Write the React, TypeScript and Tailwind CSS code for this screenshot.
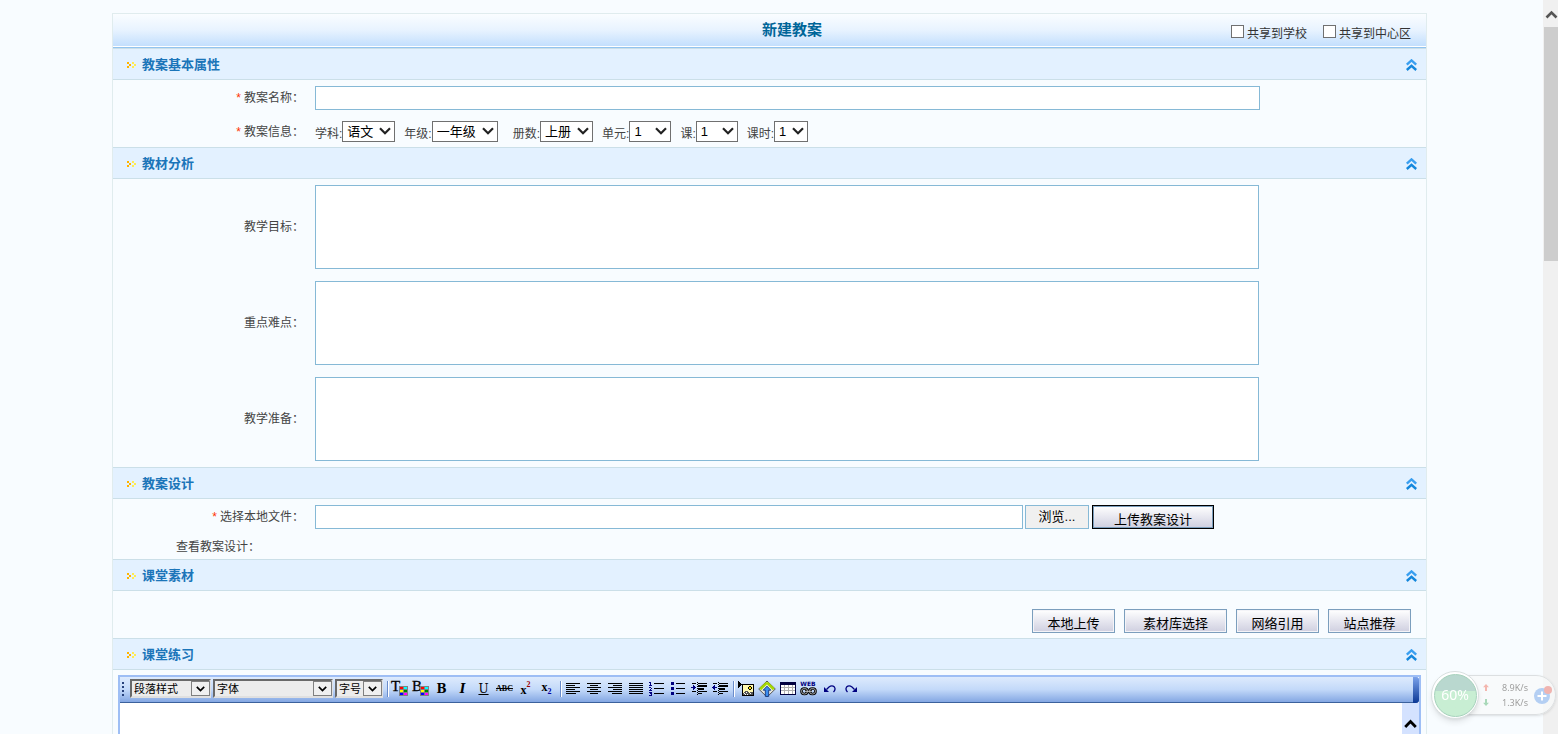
import type { ReactNode } from 'react'

function PxIcon({ w, h, children }: { w: number; h: number; children: ReactNode }) {
  return (
    <svg
      width={w}
      height={h}
      viewBox={`0 0 ${w} ${h}`}
      shapeRendering="crispEdges"
      className="block shrink-0 overflow-visible"
      aria-hidden="true"
    >
      {children}
    </svg>
  )
}

function DoubleArrow() {
  return (
    <PxIcon w={10} h={6}>
      <path d="M0 0h2v2h-2zM2 2h2v2h-2zM0 4h2v2h-2z" fill="#ffb400" />
      <path d="M5 0h2v2h-2zM7 2h2v2h-2zM5 4h2v2h-2z" fill="#ffec50" />
    </PxIcon>
  )
}

function CollapseIcon() {
  return (
    <svg width="11" height="12" viewBox="0 0 11 12" className="block" aria-hidden="true">
      <path d="M.8 5.6 5.5 1.400 10.200 5.600" fill="none" stroke="#3a9ff0" strokeWidth="2.400" />
      <path d="M.8 11 5.500 6.800 10.200 11" fill="none" stroke="#1487dc" strokeWidth="2.400" />
    </svg>
  )
}

function Section({ title, children }: { title: string; children: ReactNode }) {
  return (
    <section>
      <header className="flex h-8 items-center border-y border-[#cbdfe8] bg-[#e3f1ff] pl-[14px] pr-[9px] pt-[2px]">
        <DoubleArrow />
        <h2 className="ml-[5px] flex-1 text-[13px] font-bold leading-4 text-[#1b75b9]">{title}</h2>
        <button type="button" aria-label={`收起${title}`}>
          <CollapseIcon />
        </button>
      </header>
      {children}
    </section>
  )
}

function Label({ text, htmlFor, required }: { text: string; htmlFor: string; required?: boolean }) {
  return (
    <label htmlFor={htmlFor} className="w-[191px] shrink-0 text-right">
      {required && <span className="mr-[3px] text-[#ff3300]">*</span>}
      {text}
    </label>
  )
}

const picks = [
  { id: 'subject', label: '学科:', value: '语文', width: 'w-[53px]', gap: '' },
  { id: 'grade', label: '年级:', value: '一年级', width: 'w-[66px]', gap: 'ml-[9px]' },
  { id: 'volume', label: '册数:', value: '上册', width: 'w-[53px]', gap: 'ml-[15px]' },
  { id: 'unit', label: '单元:', value: '1', width: 'w-[42px]', gap: 'ml-[9px]' },
  { id: 'lesson', label: '课:', value: '1', width: 'w-[42px]', gap: 'ml-[9px]' },
  { id: 'period', label: '课时:', value: '1', width: 'w-[34px]', gap: 'ml-[9px]' },
]

function Pick({ id, label, value, width, gap }: (typeof picks)[number]) {
  return (
    <div className={`flex items-end ${gap}`}>
      <label htmlFor={id} className="whitespace-nowrap">
        {label}
      </label>
      <div className={`relative ${width}`}>
        <select
          id={id}
          className="block h-[21px] w-full appearance-none border border-[#707070] bg-white pl-1 text-[13px] leading-[18px] text-black"
        >
          <option>{value}</option>
        </select>
        <svg width="12" height="8" viewBox="0 0 12 8" className="pointer-events-none absolute right-1 top-[6px]" aria-hidden="true">
          <path d="M1 1.2 6 6.2 11 1.2" fill="none" stroke="#222" strokeWidth="2.2" />
        </svg>
      </div>
    </div>
  )
}

const areas = [
  { id: 'goal', label: '教学目标：' },
  { id: 'focus', label: '重点难点：' },
  { id: 'prepare', label: '教学准备：' },
]

const sources = [
  { text: '本地上传', width: 'w-[83px]' },
  { text: '素材库选择', width: 'w-[103px]' },
  { text: '网络引用', width: 'w-[83px]' },
  { text: '站点推荐', width: 'w-[83px]' },
]

function Palette() {
  return (
    <g>
      <path d="M8 5h9v10h-9z" fill="#808080" />
      <path d="M9 6h3v2h-3z" fill="#f00" />
      <path d="M13 6h3v2h-3z" fill="#0ff" />
      <path d="M9 9h3v2h-3z" fill="#ff0" />
      <path d="M13 9h3v2h-3z" fill="#008000" />
      <path d="M9 12h3v2h-3z" fill="#00f" />
      <path d="M13 12h3v2h-3z" fill="#f0f" />
    </g>
  )
}

function Lines({ d }: { d: string }) {
  return (
    <PxIcon w={14} h={12}>
      <path d={d} stroke="#000" fill="none" />
    </PxIcon>
  )
}

const textTools = [
  {
    name: '字体颜色',
    icon: (
      <PxIcon w={17} h={16}>
        <text x="0" y="10" fontSize="15" className="font-['Liberation_Serif',serif]" stroke="#000" strokeWidth="0.3">T</text>
        <Palette />
      </PxIcon>
    ),
  },
  {
    name: '背景颜色',
    icon: (
      <PxIcon w={17} h={16}>
        <text x="0" y="10" fontSize="15" className="font-['Liberation_Serif',serif]" stroke="#000" strokeWidth="0.3">B</text>
        <Palette />
      </PxIcon>
    ),
  },
  { name: '加粗', icon: <span className="font-['DejaVu_Serif',serif] text-[12px] font-bold leading-4">B</span> },
  { name: '斜体', icon: <span className="font-['DejaVu_Serif',serif] text-[12px] font-bold italic leading-4">I</span> },
  { name: '下划线', icon: <span className="font-['DejaVu_Serif',serif] text-[12px] leading-4 underline">U</span> },
  { name: '删除线', icon: <span className="font-['Liberation_Serif',serif] text-[8px] font-bold leading-4 line-through">ABC</span> },
  {
    name: '上标',
    icon: (
      <span className="flex font-['Liberation_Serif',serif]">
        <span className="pt-[3px] text-[12px] font-bold leading-3">x</span>
        <span className="text-[8px] font-bold leading-[8px] text-[#a00000]">2</span>
      </span>
    ),
  },
  {
    name: '下标',
    icon: (
      <span className="flex font-['Liberation_Serif',serif]">
        <span className="pb-[3px] text-[12px] font-bold leading-3">x</span>
        <span className="self-end text-[8px] font-bold leading-[8px] text-[#0000a0]">2</span>
      </span>
    ),
  },
]

const layoutTools = [
  { name: '左对齐', icon: <Lines d="M0 .5h14M0 2.5h9M0 4.5h14M0 6.5h9M0 8.5h14M0 10.5h10" /> },
  { name: '居中', icon: <Lines d="M0 .5h14M3 2.5h8M0 4.5h14M3 6.5h8M0 8.5h14M3 10.5h8" /> },
  { name: '右对齐', icon: <Lines d="M0 .5h14M5 2.5h9M0 4.5h14M5 6.5h9M0 8.5h14M4 10.5h10" /> },
  { name: '两端对齐', icon: <Lines d="M0 .5h14M0 2.5h14M0 4.5h14M0 6.5h14M0 8.5h14M0 10.5h14" /> },
  {
    name: '编号列表',
    icon: (
      <PxIcon w={15} h={14}>
        <path d="M5 1.5h10M5 6.500h10M5 11.5h10" stroke="#000" />
        <path
          d="M1 0h1v3h1v1h-3v-1h1v-2h-1v-1h1zM0 5h2v1h1v1h-1v1h1v1h-3v-1h1v-1h1v-1h-2zM0 10h3v4h-3v-1h2v-1h-1v-1h1h-2z"
          fill="#000080"
        />
      </PxIcon>
    ),
  },
  {
    name: '项目列表',
    icon: (
      <PxIcon w={14} h={13}>
        <path d="M5 1.5h9M5 6.5h9M5 11.5h9" stroke="#000" />
        <path d="M0 0h3v3h-3zM0 5h3v3h-3zM0 10h3v3h-3z" fill="#000080" />
      </PxIcon>
    ),
  },
  {
    name: '增加缩进',
    icon: (
      <PxIcon w={16} h={13}>
        <path d="M1 1.5h4M7 1.5h9M1 9.5h4M7 9.5h9M7 11.5h4" stroke="#000" />
        <path d="M7 3h9v2h-9zM7 6h6v2h-6z" />
        <path d="M6.5 0v13" stroke="#000" strokeDasharray="1 1" />
        <path d="M0 5h2v-2h1v1h1v1h1v1h-1v1h-1v1h-1v-2h-2z" fill="#000080" />
      </PxIcon>
    ),
  },
  {
    name: '减少缩进',
    icon: (
      <PxIcon w={16} h={13}>
        <path d="M1 1.5h4M7 1.5h9M1 9.5h4M7 9.5h9M7 11.5h4" stroke="#000" />
        <path d="M7 3h9v2h-9zM7 6h6v2h-6z" />
        <path d="M6.5 0v13" stroke="#000" strokeDasharray="1 1" />
        <path d="M0 5h1v-1h1v-1h1v2h2v1h-2v2h-1v-1h-1v-1h-1z" fill="#000080" />
      </PxIcon>
    ),
  },
]

const insertTools = [
  {
    name: '插入图片',
    icon: (
      <PxIcon w={16} h={16}>
        <path d="M0 0h1v1h1v1h1v1h1v1h-1v1h-1v1h-1v1h-1z" />
        <path d="M4 3h12v12h-12z" />
        <path d="M5 4h10v10h-10z" fill="#fff8b0" />
        <path d="M11 5h2v1h1v2h-1v1h-2v-1h-1v-2h1z" />
        <path d="M11 6h2v2h-2z" fill="#ffe400" />
        <path d="M5 14v-2l2-2h2l2 2 1-1h2l1 1v2z" fill="#555" />
        <path d="M6 12.500h1M8 11.500h1M9 13.500h1M12 12.500h1M7 13.500h1" stroke="#fff" />
      </PxIcon>
    ),
  },
  {
    name: '上传文件',
    icon: (
      <svg width="18" height="18" viewBox="0 0 18 18" className="block" aria-hidden="true">
        <path d="M9 1 17.3 9 9 17 .7 9z" fill="#e8e8e0" stroke="#555" />
        <path d="M9 2.6 2.2 9.2M9 2.6 15.8 9.2" stroke="#a4d800" strokeWidth="2.6" />
        <path d="M9 6.2 12.8 10.2h-2.1v6.2H7.3v-6.2H5.2z" fill="#3b8df0" stroke="#12347c" strokeWidth="0.9" />
      </svg>
    ),
  },
  {
    name: '插入表格',
    icon: (
      <PxIcon w={16} h={13}>
        <path d="M0 0h16v13h-16z" fill="#000040" />
        <path d="M1 3h14v9h-14z" fill="#fff" />
        <path d="M1 5.5h14M1 8.5h14M4.5 3v9M8.5 3v9M12.500 3v9" stroke="#b0b0b0" />
      </PxIcon>
    ),
  },
  {
    name: '插入链接',
    icon: (
      <svg width="17" height="15" viewBox="0 0 17 15" className="block overflow-visible" aria-hidden="true">
        <text x="8" y="5" fontSize="6" fontWeight="bold" fill="#000080" textAnchor="middle" className="font-['DejaVu_Sans',sans-serif]">WEB</text>
        <g fill="none">
          <rect x="1.5" y="7.5" width="6" height="5.500" rx="2.7" stroke="#000" strokeWidth="2.6" />
          <rect x="9.5" y="7.5" width="6" height="5.500" rx="2.7" stroke="#000" strokeWidth="2.6" />
          <path d="M5 10.300h7" stroke="#000" strokeWidth="2.800" />
          <rect x="1.5" y="7.5" width="6" height="5.500" rx="2.7" stroke="#ccc" strokeWidth="0.8" />
          <rect x="9.5" y="7.5" width="6" height="5.500" rx="2.7" stroke="#ccc" strokeWidth="0.8" />
          <path d="M5 10.300h7" stroke="#ccc" />
        </g>
      </svg>
    ),
  },
  {
    name: '撤销',
    icon: (
      <svg width="12" height="8" viewBox="0 0 12 8" className="block" aria-hidden="true">
        <path d="M0 2v5h5z" fill="#000080" />
        <path d="M2.5 4.5 5 2Q8-.2 10.4 2q1.6 2.4-.9 5" fill="none" stroke="#000080" strokeWidth="1.3" />
      </svg>
    ),
  },
  {
    name: '重做',
    icon: (
      <svg width="12" height="8" viewBox="0 0 12 8" className="block" aria-hidden="true">
        <path d="M12 2v5H7z" fill="#000080" />
        <path d="M9.5 4.5 7 2Q4-.2 1.6 2 0 4.4 2.5 7" fill="none" stroke="#000080" strokeWidth="1.3" />
      </svg>
    ),
  },
]

function ToolGroup({ tools }: { tools: { name: string; icon: ReactNode }[] }) {
  return (
    <>
      <span className="h-4 w-[2px] border-l border-[#6a8ccb] bg-white" />
      <div className="flex">
        {tools.map((t) => (
          <button key={t.name} type="button" aria-label={t.name} className="flex h-5 w-[21px] items-center justify-center text-black">
            {t.icon}
          </button>
        ))}
      </div>
    </>
  )
}

const formats = [
  { label: '段落样式', width: 'w-[81px]' },
  { label: '字体', width: 'w-[120px]' },
  { label: '字号', width: 'w-[48px]' },
]

function FormatSelect({ label, width }: { label: string; width: string }) {
  return (
    <div className={`relative ${width}`}>
      <select
        aria-label={label}
        className="block h-[19px] w-full appearance-none border-2 border-b-[#e0e0e0] border-l-[#696969] border-r-[#e0e0e0] border-t-[#696969] bg-[#ececec] pl-[2px] text-[11px] leading-[14px] text-black"
      >
        <option>{label}</option>
      </select>
      <span className="pointer-events-none absolute right-[1px] top-[2px] flex h-[15px] w-[19px] items-center justify-center border border-[#808080] bg-[#f0f0f0]">
        <svg width="9" height="6" viewBox="0 0 9 6" aria-hidden="true">
          <path d="M.8.8 4.5 4.5 8.2.8" fill="none" stroke="#000" strokeWidth="1.7" />
        </svg>
      </span>
    </div>
  )
}

function Editor() {
  return (
    <div className="mx-[5px] mt-[5px] border-2 border-[#9ebef5] bg-white">
      <div className="flex rounded-r-[3px] bg-[#9ebef5]">
        <div className="flex h-[26px] flex-1 items-center border-b border-[#3b619c] bg-linear-to-b from-[#deebfd] via-[#c3d9f9] to-[#84a7e3] pb-[2px] pl-[2px]">
          <PxIcon w={3} h={14}>
            <path d="M0 0h2v2h-2zM0 4h2v2h-2zM0 8h2v2h-2zM0 12h2v2h-2z" fill="#27417b" />
          </PxIcon>
          <div className="ml-[5px] mr-1 flex gap-[2px]">
            {formats.map((f) => (
              <FormatSelect key={f.label} {...f} />
            ))}
          </div>
          <ToolGroup tools={textTools} />
          <span className="w-[3px]" />
          <ToolGroup tools={layoutTools} />
          <span className="w-[3px]" />
          <ToolGroup tools={insertTools} />
        </div>
        <div className="w-[6px] rounded-r-[3px] bg-linear-to-b from-[#7ba2ea] to-[#0a3795]" />
      </div>
      <div className="flex h-[320px] justify-end">
        <textarea aria-label="课堂练习" className="block min-w-0 flex-1 resize-none bg-white outline-none" />
        <div className="flex w-[17px] justify-center bg-[#d4e2ff] pt-4">
          <svg width="13" height="9" viewBox="0 0 13 9" aria-hidden="true">
            <path d="M1.2 8 6.5 2.6 11.8 8" fill="none" stroke="#000" strokeWidth="2.8" />
          </svg>
        </div>
      </div>
    </div>
  )
}

function SpeedWidget() {
  return (
    <div className="fixed bottom-[15px] right-[2px] flex h-12 w-[125px] items-center font-['Noto_Sans',sans-serif]">
      <div className="absolute left-6 right-0 h-[40px] rounded-r-full border border-[#dcdfe1] bg-[#f8f9fa]/70 shadow-sm" />
      <div className="relative flex size-12 items-center justify-center rounded-full border border-[#d8dfdf] bg-white shadow-md">
        <div className="flex size-[43px] items-center justify-center rounded-full border border-[#a5d1bb] bg-linear-to-b from-[#b9d8cf] from-40% to-[#c8eed3] to-40% text-[14px] text-white">
          60%
        </div>
      </div>
      <div className="relative ml-1 grid grid-cols-[8px_auto] items-center gap-x-[11px] text-[9px] leading-[15px] text-[#a0a0a0]">
        <svg width="6" height="7" viewBox="0 0 6 7" aria-hidden="true">
          <path d="M3 0 6 3.2H4V7H2V3.2H0z" fill="#f3b6ae" />
        </svg>
        <span>8.9K/s</span>
        <svg width="6" height="7" viewBox="0 0 6 7" aria-hidden="true">
          <path d="M3 7 0 3.8h2V0h2v3.8h2z" fill="#a9d8b9" />
        </svg>
        <span>1.3K/s</span>
      </div>
      <svg width="20" height="20" viewBox="0 0 20 20" className="absolute right-[3px]" aria-hidden="true">
        <circle cx="9" cy="11" r="8" fill="#b4cff3" />
        <path d="M9 6.5v9M4.5 11h9" stroke="#fff" strokeWidth="2" />
        <circle cx="15" cy="5" r="4" fill="#f0b4b0" />
      </svg>
    </div>
  )
}

function ShareOption({ text }: { text: string }) {
  return (
    <label className="flex items-center gap-[3px]">
      <input type="checkbox" className="size-[13px] appearance-none border border-[#707070] bg-white" />
      <span className="pt-1">{text}</span>
    </label>
  )
}

const buttonFace =
  'h-6 border bg-linear-to-b from-white to-[#cfcfe0] pt-[6px] text-[13px] leading-4 text-black whitespace-nowrap'

export default function App() {
  return (
    <div className="flex h-screen overflow-hidden bg-[#f8fcff] font-['Liberation_Sans','Noto_Sans_CJK_SC',sans-serif] text-xs leading-4 text-[#444]">
      <main className="min-w-0 flex-1 pl-[112px] pr-[116px] pt-[13px]">
        <form className="border border-[#e0ecee]">
          <div className="border-b border-[#92c4f0] bg-white pb-px">
            <div className="grid h-8 grid-cols-[1fr_auto_1fr] items-center bg-linear-to-b from-[#fafdff] via-[#e8f3ff] to-[#c3dffd] pl-[60px] pr-[15px]">
              <span />
              <h1 className="text-[15px] font-bold leading-5 text-[#069]">新建教案</h1>
              <div className="flex justify-end gap-4 pt-[3px] text-[#333]">
                <ShareOption text="共享到学校" />
                <ShareOption text="共享到中心区" />
              </div>
            </div>
          </div>

          <Section title="教案基本属性">
            <div className="flex flex-col gap-[11px] pb-[5px] pr-[166px] pt-[6px]">
              <div className="flex items-center gap-[11px]">
                <Label text="教案名称：" htmlFor="name" required />
                <input id="name" type="text" className="h-6 min-w-0 flex-1 border border-[#86b9d6] bg-white px-1" />
              </div>
              <div className="flex items-center gap-[11px]">
                <Label text="教案信息：" htmlFor="subject" required />
                <div className="flex">
                  {picks.map((p) => (
                    <Pick key={p.id} {...p} />
                  ))}
                </div>
              </div>
            </div>
          </Section>

          <Section title="教材分析">
            <div className="flex flex-col gap-3 py-[6px] pr-[167px]">
              {areas.map((a) => (
                <div key={a.id} className="flex items-center gap-[11px]">
                  <Label text={a.label} htmlFor={a.id} />
                  <textarea id={a.id} className="block h-[84px] min-w-0 flex-1 resize-none border border-[#86b9d6] bg-white p-1" />
                </div>
              ))}
            </div>
          </Section>

          <Section title="教案设计">
            <div className="pb-1 pt-[6px]">
              <div className="flex items-center pr-[212px]">
                <Label text="选择本地文件：" htmlFor="file" required />
                <input id="file" type="text" className="ml-[11px] h-6 min-w-0 flex-1 border border-[#86b9d6] bg-white px-1" />
                <button type="button" className="ml-[2px] h-6 w-16 border border-[#86b9d6] bg-[#f0f0f0] text-[13px] leading-4 text-black">
                  浏览...
                </button>
                <button type="button" className={`${buttonFace} ml-[3px] w-[122px] border-black inset-shadow-[0_0_0_1px_#7b9ebd]`}>
                  上传教案设计
                </button>
              </div>
              <p className="pl-[63px] pt-[10px]">查看教案设计：</p>
            </div>
          </Section>

          <Section title="课堂素材">
            <div className="flex justify-end gap-[9px] pb-[5px] pr-[15px] pt-[18px]">
              {sources.map((s) => (
                <button key={s.text} type="button" className={`${buttonFace} ${s.width} border-[#7b9ebd] inset-shadow-[0_0_0_1px_#f4f4f8]`}>
                  {s.text}
                </button>
              ))}
            </div>
          </Section>

          <Section title="课堂练习">
            <Editor />
          </Section>
        </form>
      </main>

      <div className="w-[15px] shrink-0 bg-[#f0f0f0] pl-px">
        <svg width="14" height="27" viewBox="0 0 14 27" className="block" aria-hidden="true">
          <path d="M2.5 17.5 7.5 12.5 12.5 17.5" fill="none" stroke="#555" strokeWidth="2.6" />
        </svg>
        <div className="h-[234px] bg-[#cdcdcd]" />
      </div>

      <SpeedWidget />
    </div>
  )
}
